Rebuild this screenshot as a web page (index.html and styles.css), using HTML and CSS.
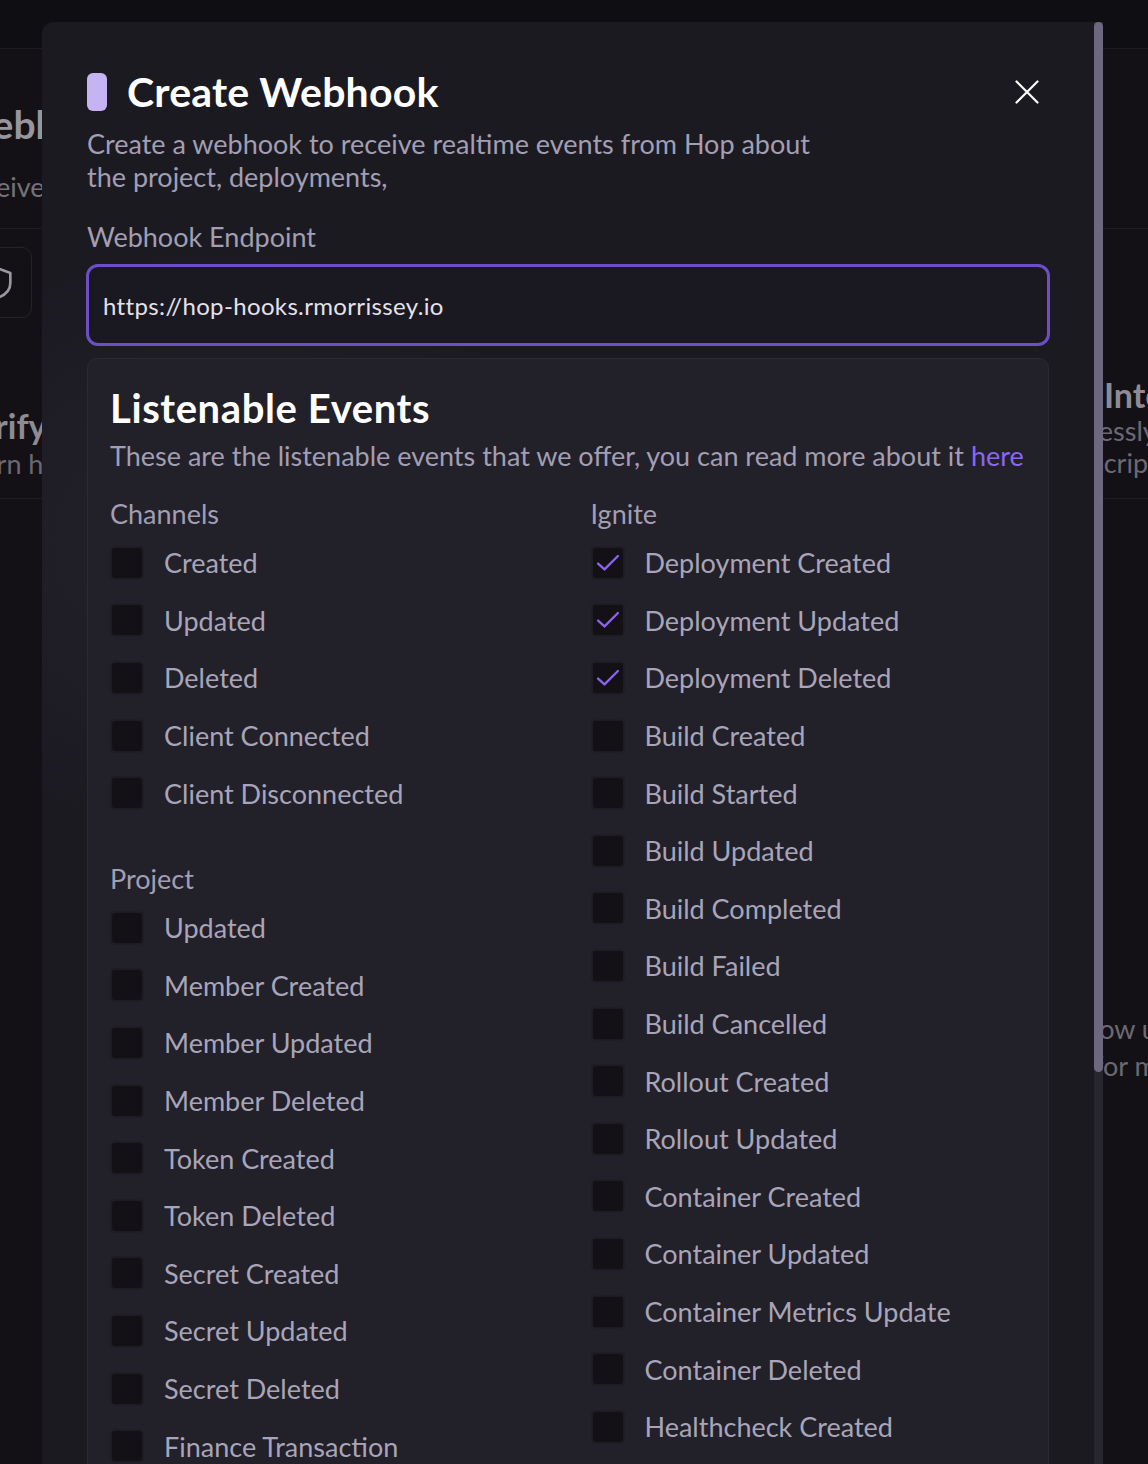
FILE: index.html
```html
<!DOCTYPE html>
<html lang="en">
<head>
<meta charset="utf-8">
<title>Create Webhook</title>
<link rel="stylesheet" href="styles.css">
</head>
<body>
<div class="bg-page">
  <div class="bg-header"></div>
  <div class="bg-hero">
    <div class="bg-hero-title">Webhooks</div>
    <div class="bg-hero-sub">Receive events</div>
  </div>
  <div class="bg-cards">
    <div class="bg-card bg-card-left">
      <div class="bg-icon-box">
        <svg width="40" height="40" viewBox="0 0 24 24" fill="none" stroke="#9a979f" stroke-width="1.6" stroke-linejoin="round"><path d="M12 3 L20 6 V12 C20 16.5 16.5 19.5 12 21 C7.5 19.5 4 16.5 4 12 V6 Z"/></svg>
      </div>
      <div class="bg-card-title">Verify</div>
      <div class="bg-card-text">Learn how</div>
    </div>
    <div class="bg-card bg-card-right">
      <div class="bg-card-title">Integrate</div>
      <div class="bg-card-text shift-a">Seamlessly</div>
      <div class="bg-card-text shift-b">scripts</div>
    </div>
  </div>
  <div class="bg-lower">
    <div class="bg-card-text shift-c">allow us</div>
    <div class="bg-card-text shift-d">for more</div>
  </div>
</div>

<div class="modal">
  <div class="modal-body">
    <div class="modal-head">
      <div class="title-wrap">
        <span class="pill"></span>
        <h1 class="title">Create Webhook</h1>
      </div>
      <button class="close" aria-label="Close">
        <svg width="24" height="24" viewBox="0 0 24 24" fill="none" stroke="#ffffff" stroke-width="2.2" stroke-linecap="round"><path d="M1.5 1.5 L22.5 22.5 M22.5 1.5 L1.5 22.5"/></svg>
      </button>
    </div>
    <p class="subtitle">Create a webhook to receive realtime events from Hop about<br>the project, deployments,</p>

    <label class="field-label">Webhook Endpoint</label>
    <div class="input">https://hop-hooks.rmorrissey.io</div>

    <section class="events">
      <h2 class="events-title">Listenable Events</h2>
      <p class="events-desc">These are the listenable events that we offer, you can read more about it <a class="link" href="#">here</a></p>

      <div class="events-grid">
        <div class="col">
          <div class="group">
            <div class="group-label">Channels</div>
            <div class="item"><span class="box"></span><span class="item-label">Created</span></div>
            <div class="item"><span class="box"></span><span class="item-label">Updated</span></div>
            <div class="item"><span class="box"></span><span class="item-label">Deleted</span></div>
            <div class="item"><span class="box"></span><span class="item-label">Client Connected</span></div>
            <div class="item"><span class="box"></span><span class="item-label">Client Disconnected</span></div>
          </div>
          <div class="group">
            <div class="group-label">Project</div>
            <div class="item"><span class="box"></span><span class="item-label">Updated</span></div>
            <div class="item"><span class="box"></span><span class="item-label">Member Created</span></div>
            <div class="item"><span class="box"></span><span class="item-label">Member Updated</span></div>
            <div class="item"><span class="box"></span><span class="item-label">Member Deleted</span></div>
            <div class="item"><span class="box"></span><span class="item-label">Token Created</span></div>
            <div class="item"><span class="box"></span><span class="item-label">Token Deleted</span></div>
            <div class="item"><span class="box"></span><span class="item-label">Secret Created</span></div>
            <div class="item"><span class="box"></span><span class="item-label">Secret Updated</span></div>
            <div class="item"><span class="box"></span><span class="item-label">Secret Deleted</span></div>
            <div class="item"><span class="box"></span><span class="item-label">Finance Transaction</span></div>
          </div>
        </div>
        <div class="col">
          <div class="group">
            <div class="group-label">Ignite</div>
            <div class="item"><span class="box"><svg class="tick" width="28" height="28" viewBox="0 0 24 24" fill="none" stroke="#8b63f2" stroke-width="2" stroke-linecap="round" stroke-linejoin="round"><path d="M3.5 12.5 L9 17.5 L20.5 6"/></svg></span><span class="item-label">Deployment Created</span></div>
            <div class="item"><span class="box"><svg class="tick" width="28" height="28" viewBox="0 0 24 24" fill="none" stroke="#8b63f2" stroke-width="2" stroke-linecap="round" stroke-linejoin="round"><path d="M3.5 12.5 L9 17.5 L20.5 6"/></svg></span><span class="item-label">Deployment Updated</span></div>
            <div class="item"><span class="box"><svg class="tick" width="28" height="28" viewBox="0 0 24 24" fill="none" stroke="#8b63f2" stroke-width="2" stroke-linecap="round" stroke-linejoin="round"><path d="M3.5 12.5 L9 17.5 L20.5 6"/></svg></span><span class="item-label">Deployment Deleted</span></div>
            <div class="item"><span class="box"></span><span class="item-label">Build Created</span></div>
            <div class="item"><span class="box"></span><span class="item-label">Build Started</span></div>
            <div class="item"><span class="box"></span><span class="item-label">Build Updated</span></div>
            <div class="item"><span class="box"></span><span class="item-label">Build Completed</span></div>
            <div class="item"><span class="box"></span><span class="item-label">Build Failed</span></div>
            <div class="item"><span class="box"></span><span class="item-label">Build Cancelled</span></div>
            <div class="item"><span class="box"></span><span class="item-label">Rollout Created</span></div>
            <div class="item"><span class="box"></span><span class="item-label">Rollout Updated</span></div>
            <div class="item"><span class="box"></span><span class="item-label">Container Created</span></div>
            <div class="item"><span class="box"></span><span class="item-label">Container Updated</span></div>
            <div class="item"><span class="box"></span><span class="item-label">Container Metrics Update</span></div>
            <div class="item"><span class="box"></span><span class="item-label">Container Deleted</span></div>
            <div class="item"><span class="box"></span><span class="item-label">Healthcheck Created</span></div>
            <div class="item"><span class="box"></span><span class="item-label">Healthcheck Updated</span></div>
          </div>
        </div>
      </div>
    </section>
  </div>
  <div class="scrollbar"><div class="thumb"></div></div>
</div>
</body>
</html>
```

FILE: styles.css
```css
* { box-sizing: border-box; }

html, body {
  margin: 0;
  padding: 0;
}

body {
  width: 1148px;
  height: 1464px;
  overflow: hidden;
  position: relative;
  background: #131116;
  font-family: "Lato", "Inter", "Noto Sans", sans-serif;
  color: #a6a2b6;
}

/* ---------- background page ---------- */
.bg-page {
  margin-left: -44px;
  width: 1300px;
}

.bg-header {
  height: 49px;
  background: #0f0e12;
  border-bottom: 1px solid #1f1d24;
}

.bg-hero {
  height: 180px;
  border-bottom: 1px solid #1f1d24;
  padding-top: 53px;
}

.bg-hero-title {
  font-size: 39px;
  font-weight: 700;
  color: #98959e;
  line-height: 44px;
  margin-left: -2px;
}

.bg-hero-sub {
  margin-top: 26px;
  font-size: 27px;
  color: #75727b;
  line-height: 30px;
  margin-left: -3px;
}

.bg-cards {
  display: flex;
  height: 270px;
  border-bottom: 1px solid #1f1d24;
}

.bg-card-left {
  width: 1148px;
  padding-top: 18px;
}

.bg-icon-box {
  width: 80px;
  height: 71px;
  border: 1px solid #25232a;
  border-radius: 10px;
  display: flex;
  align-items: center;
  justify-content: flex-end;
  padding-right: 14px;
  margin-left: -4px;
}

.bg-card-title {
  font-size: 34px;
  font-weight: 700;
  color: #8e8b94;
  line-height: 40px;
}

.bg-card-left .bg-card-title {
  margin-top: 88px;
}

.bg-card-left .bg-card-text {
  margin-top: 2px;
}

.bg-card-text {
  font-size: 27px;
  color: #6c6972;
  line-height: 32px;
}

.bg-card-right {
  padding-top: 146px;
}

.shift-a { margin-left: -76px; }
.shift-b { margin-left: -12px; }

.bg-lower {
  padding-left: 1147px;
  padding-top: 511px;
}

.bg-lower .bg-card-text {
  line-height: 37px;
  color: #6c6972;
}

.shift-c { margin-left: -30px; }
.shift-d { margin-left: -9px; }

/* ---------- modal ---------- */
.modal {
  position: absolute;
  left: 42px;
  top: 22px;
  width: 1061px;
  height: 1480px;
  display: flex;
}

.modal-body {
  width: 1052px;
  height: 100%;
  background:
    radial-gradient(ellipse 520px 420px at 180px 520px, rgba(50, 47, 58, 0.35), transparent 70%),
    #1c1a21;
  border-radius: 12px 0 0 0;
  padding: 46px 45px 0 45px;
}

.scrollbar {
  width: 9px;
  height: 100%;
  background: #27252d;
}

.thumb {
  height: 1050px;
  background: #6d6780;
  border-radius: 5px;
}

.modal-head {
  display: flex;
  align-items: center;
  justify-content: space-between;
  height: 48px;
}

.title-wrap {
  display: flex;
  align-items: center;
  gap: 20px;
}

.pill {
  width: 20px;
  height: 38px;
  border-radius: 6px;
  background: #c5b3f4;
}

.title {
  margin: 0;
  font-size: 41px;
  font-weight: 700;
  color: #ffffff;
  line-height: 48px;
  letter-spacing: 0.2px;
}

.close {
  width: 44px;
  height: 44px;
  margin-right: 0;
  background: none;
  border: 0;
  padding: 0;
  display: flex;
  align-items: center;
  justify-content: center;
  cursor: pointer;
}

.subtitle {
  margin: 11px 0 0 0;
  font-size: 27px;
  line-height: 33px;
  color: #a29eb3;
}

.field-label {
  display: block;
  margin-top: 27px;
  font-size: 27px;
  line-height: 33px;
  color: #a29eb3;
}

.input {
  margin: 11px -1px 0 -1px;
  height: 82px;
  border: 3px solid #6b4fc6;
  border-radius: 12px;
  background: #1a1820;
  padding: 0 14px;
  display: flex;
  align-items: center;
  font-size: 24px;
  letter-spacing: 0.35px;
  color: #e4e2ea;
}

.events {
  margin-top: 12px;
  background: #222029;
  border: 1px solid #2b2932;
  border-radius: 10px;
  padding: 26px 22px 40px 22px;
}

.events-title {
  margin: 0;
  font-size: 40px;
  font-weight: 700;
  line-height: 46px;
  letter-spacing: 0.6px;
  color: #ffffff;
}

.events-desc {
  margin: 8px 0 0 0;
  font-size: 27px;
  line-height: 34px;
  color: #a29eb3;
}

.link {
  color: #8b66f0;
  text-decoration: none;
}

.events-grid {
  margin-top: 24px;
  display: grid;
  grid-template-columns: 1fr 1fr;
  column-gap: 45px;
}

.group + .group {
  margin-top: 40px;
}

.group-label {
  font-size: 27px;
  line-height: 34px;
  color: #a29eb3;
  margin-bottom: 3px;
}

.item {
  height: 57.6px;
  display: flex;
  align-items: center;
}

.box {
  width: 30px;
  height: 30px;
  margin-left: 2px;
  border-radius: 3px;
  background: #131116;
  box-shadow: 0 0 0 2px #1e1c24;
  display: flex;
  align-items: center;
  justify-content: center;
  flex: none;
}

.item-label {
  margin-left: 22px;
  font-size: 27px;
  color: #a9a5b9;
}
```
